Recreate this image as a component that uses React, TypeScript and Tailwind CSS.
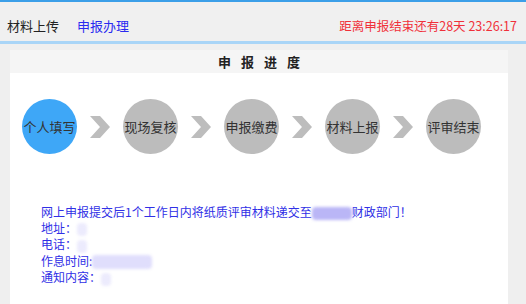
import React from 'react'

const STEPS = ['个人填写', '现场复核', '申报缴费', '材料上报', '评审结束']

const font = { fontFamily: '"Noto Sans CJK SC", "Noto Sans", sans-serif' }

function Chevron() {
  return (
    <svg width="20" height="22" viewBox="0 0 20 22" className="shrink-0">
      <polygon points="0,0 10,0 20,11 10,22 0,22 10,11" fill="#bdbdbd" />
    </svg>
  )
}

function Blur({ className }: { className: string }) {
  return <span className={`inline-block align-middle rounded-sm blur-[1.5px] ${className}`} />
}

export default function App() {
  return (
    <div className="w-[526px] h-[304px] overflow-hidden bg-[#efefef]" style={font}>
      {/* top bar */}
      <div className="h-[41px] border-t-2 border-[#3c9fe8] bg-[#f0f0f0] flex items-center pt-[9px] px-[7px] text-[13px]">
        <span className="text-[#222]">材料上传</span>
        <span className="ml-[18px] text-[#2a2af0]">申报办理</span>
        <span className="ml-auto mr-[2px] text-[12.5px] text-[#f0303a]">距离申报结束还有28天 23:26:17</span>
      </div>
      <div className="h-[3px] bg-[#a9d5f7]" />

      {/* panel */}
      <div className="ml-[10px] mt-[6px] w-[498px] h-[260px] bg-white">
        <div className="h-[23px] bg-[#f5f5f5] flex items-center justify-center text-[13px] font-bold text-[#222] tracking-[10px] pl-[10px]">
          申报进度
        </div>

        <div className="flex items-center pl-[12px] mt-[26px] gap-[13px]">
          {STEPS.map((s, i) => (
            <React.Fragment key={s}>
              {i > 0 && <Chevron />}
              <div
                className={`w-[55px] h-[55px] rounded-full flex items-center justify-center text-[13px] text-[#333] shrink-0 ${
                  i === 0 ? 'bg-[#3ea7f7]' : 'bg-[#bcbcbc]'
                }`}
              >
                {s}
              </div>
            </React.Fragment>
          ))}
        </div>

        <div className="mt-[50px] pl-[31px] text-[12px] leading-[15px] text-[#3030e6]">
          <div>
            网上申报提交后1个工作日内将纸质评审材料递交至
            <Blur className="w-[40px] h-[13px] bg-[#bab6f6]" />
            财政部门！
          </div>
          <div>
            地址：
            <Blur className="w-[10px] h-[13px] bg-[#ecebfd]" />
          </div>
          <div>
            电话：
            <Blur className="w-[10px] h-[13px] bg-[#ecebfd]" />
          </div>
          <div>
            作息时间:
            <Blur className="w-[60px] h-[14px] bg-[#e0defc]" />
          </div>
          <div>
            通知内容：
            <Blur className="w-[10px] h-[13px] bg-[#ecebfd]" />
          </div>
        </div>
      </div>
    </div>
  )
}
